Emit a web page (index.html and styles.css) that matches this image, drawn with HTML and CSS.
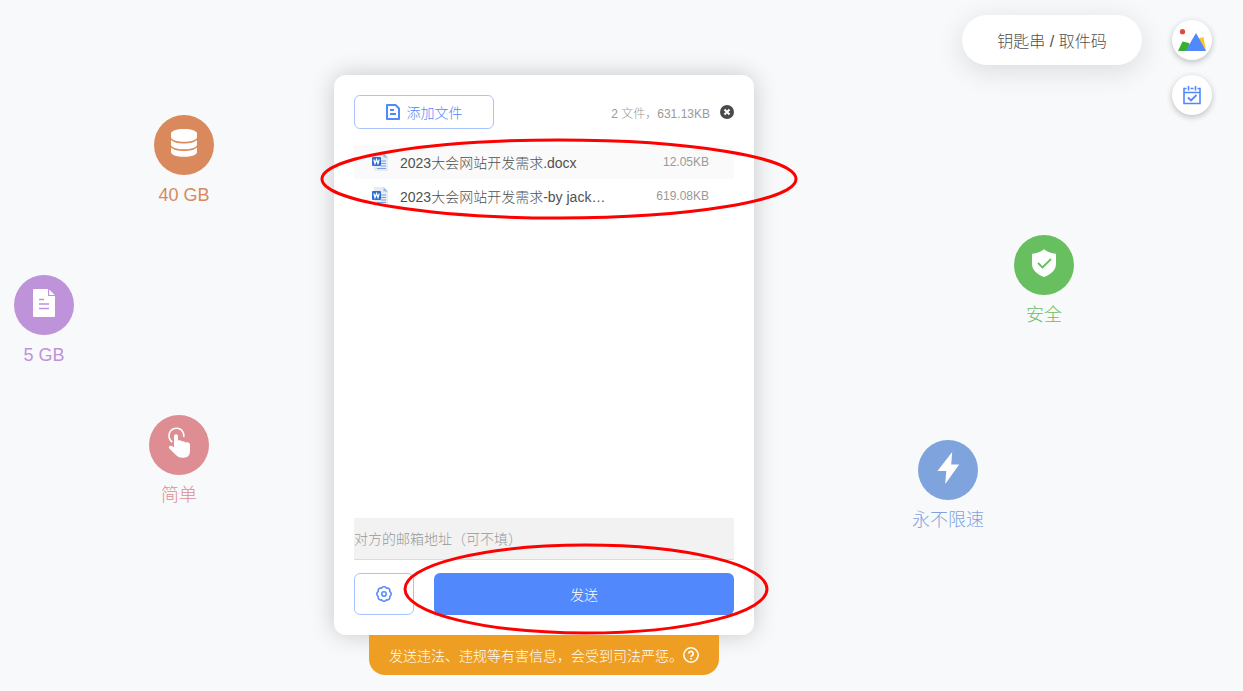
FILE: index.html
```html
<!DOCTYPE html>
<html lang="zh-CN">
<head>
  <meta charset="UTF-8" />
  <meta name="viewport" content="width=device-width, initial-scale=1" />
  <title>发送文件</title>
  <link rel="stylesheet" href="styles.css">
</head>
<body>

  <main class="stage">

    <div class="features features-left">
      <div class="feature storage">
        <span class="feature-icon">
          <svg width="60" height="60" viewBox="0 0 60 60">
            <g fill="#fff">
              <path d="M17 18.500c0-2.600 5.500-4.500 13-4.500s13 1.900 13 4.500v3.500c0 2.700-5.500 4.800-13 4.800s-13-2.100-13-4.800z" />
              <path d="M17 25c2.500 2.500 7.500 3.500 13 3.500s10.500-1 13-3.500v4.500c0 2.700-5.500 4.800-13 4.800s-13-2.100-13-4.800z" />
              <path d="M17 32.500c2.500 2.500 7.500 3.500 13 3.500s10.500-1 13-3.500v4.500c0 2.700-5.500 4.800-13 4.800s-13-2.100-13-4.800z" />
            </g>
          </svg>
        </span>
        <span>40 GB</span>
      </div>
      <div class="feature single">
        <span class="feature-icon">
          <svg width="60" height="60" viewBox="0 0 60 60">
            <path d="M20 14h14v7h7v20a1 1 0 0 1-1 1H20a1 1 0 0 1-1-1V15a1 1 0 0 1 1-1z" fill="#fff" />
            <path d="M35.200 14.500l5.500 5.500h-5.500z" fill="#fff" />
            <path d="M25 24.500h5M25 29h10M25 33.500h10" stroke="#be93d9" stroke-width="1.500" fill="none" />
          </svg>
        </span>
        <span>5 GB</span>
      </div>
      <div class="feature simple">
        <span class="feature-icon">
          <svg width="60" height="60" viewBox="0 0 60 60">
            <path d="M23.300 27a7.500 7.500 0 1 1 11.500-5" fill="none" stroke="#fff" stroke-width="1.600" />
            <path d="M25 21.300a2 2 0 0 1 4 0V25.500q2.600-1 3.800.8 2.400-.6 3.600 1.200Q40.800 26.600 41 30v6.500q-.3 6.200-6.500 6.200-4.500.4-7-2.200L20.300 33.500q-1.200-1.600.2-2.600 1.300-.7 4.500 1.300z" fill="#fff" />
          </svg>
        </span>
        <span>简单</span>
      </div>
    </div>

    <div class="sender">
      <form class="card">
        <div class="card-head">
          <button type="button" class="btn add-btn">
            <svg width="14" height="16" viewBox="0 0 14 16" fill="none" stroke="currentColor" stroke-width="2">
              <path d="M1 1h8.500L13 4.500V15H1z" stroke-linejoin="round" />
              <path d="M4 6h4M4 10h6" />
            </svg>
            添加文件
          </button>
          <span class="total">2 文件，631.13KB</span>
          <button type="button" class="clear-btn" aria-label="清空">
            <svg width="14" height="14" viewBox="0 0 14 14">
              <circle cx="7" cy="7" r="7" fill="#4a4a4a" />
              <path d="M4.500 4.500l5 5M9.500 4.500l-5 5" stroke="#fff" stroke-width="2" />
            </svg>
          </button>
        </div>

        <ul class="files">
          <li>
            <svg class="doc" width="16" height="18" viewBox="0 0 16 18">
              <path d="M2 0h9.500L16 4.500V18H2z" fill="#e6ecf5" />
              <path d="M11.500 0L16 4.500h-4.500z" fill="#a5bce0" />
              <path d="M9 8h5M9 10.500h5M9 13h5M5 15.500h9" stroke="#7da2dc" stroke-width="1" />
              <rect y="4" width="9" height="9" rx="1" fill="#2f6fd0" />
              <path d="M1.800 6.500l1.200 4 1.500-4 1.500 4 1.200-4" fill="none" stroke="#fff" stroke-width="1.200" />
            </svg>
            <span class="name">2023大会网站开发需求.docx</span>
            <span class="size">12.05KB</span>
          </li>
          <li>
            <svg class="doc" width="16" height="18" viewBox="0 0 16 18">
              <path d="M2 0h9.500L16 4.500V18H2z" fill="#e6ecf5" />
              <path d="M11.500 0L16 4.500h-4.500z" fill="#a5bce0" />
              <path d="M9 8h5M9 10.500h5M9 13h5M5 15.500h9" stroke="#7da2dc" stroke-width="1" />
              <rect y="4" width="9" height="9" rx="1" fill="#2f6fd0" />
              <path d="M1.800 6.500l1.200 4 1.500-4 1.500 4 1.200-4" fill="none" stroke="#fff" stroke-width="1.200" />
            </svg>
            <span class="name">2023大会网站开发需求-by jack…</span>
            <span class="size">619.08KB</span>
          </li>
        </ul>

        <input type="email" class="email" placeholder="对方的邮箱地址（可不填）" aria-label="对方的邮箱地址" />

        <div class="actions">
          <button type="button" class="btn set-btn" aria-label="设置">
            <svg width="16" height="16" viewBox="0 0 16 16" fill="none" stroke="currentColor" stroke-width="1.500">
              <path d="M13.800 5.600A2.700 2.700 0 0 1 13.800 10.400A2.700 2.700 0 0 1 10.400 13.800A2.700 2.700 0 0 1 5.600 13.800A2.700 2.700 0 0 1 2.200 10.400A2.700 2.700 0 0 1 2.200 5.600A2.700 2.700 0 0 1 5.600 2.200A2.700 2.700 0 0 1 10.400 2.200A2.700 2.700 0 0 1 13.800 5.600z" />
              <circle cx="8" cy="8" r="2.200" />
            </svg>
          </button>
          <button type="button" class="send-btn">发送</button>
        </div>
      </form>

      <div class="notice">
        <span>发送违法、违规等有害信息，会受到司法严惩。</span>
        <svg width="16" height="16" viewBox="0 0 16 16" fill="none" stroke="#fff" stroke-width="1.500">
          <circle cx="8" cy="8" r="7.200" />
          <path d="M5.800 6.500a2.200 2.200 0 1 1 3.300 1.900c-.8.400-1.100.8-1.100 1.500" stroke-width="1.700" />
          <path d="M8 11v1.600" stroke-width="1.700" />
        </svg>
      </div>

      <!-- hand drawn marks over the card -->
      <svg class="marks" width="420" height="600" viewBox="0 0 420 600" fill="none" stroke="#f00" stroke-width="3">
        <ellipse cx="225" cy="104" rx="237" ry="39" />
        <ellipse cx="252" cy="514" rx="181" ry="44" />
      </svg>
    </div>

    <div class="features features-right">
      <div class="feature safe">
        <span class="feature-icon">
          <svg width="60" height="60" viewBox="0 0 60 60">
            <path d="M30 14.200c3 2.500 7 4.200 12 4.500v10c0 6.500-5 10.500-12 13.300-7-2.800-12-6.800-12-13.300v-10c5-.3 9-2 12-4.500z" fill="#fff" />
            <path d="M24 28l4.500 4.500 8.500-8.500" fill="none" stroke="#67bf5f" stroke-width="1.800" />
          </svg>
        </span>
        <span>安全</span>
      </div>
      <div class="feature speed">
        <span class="feature-icon">
          <svg width="60" height="60" viewBox="0 0 60 60">
            <path d="M34.200 12L19.500 31h8.800L27.200 44l14-19.500h-8z" fill="#fff" />
          </svg>
        </span>
        <span>永不限速</span>
      </div>
    </div>

  </main>

  <nav class="tools">
    <button type="button" class="code-btn">钥匙串 / 取件码</button>
    <div class="round-list">
      <a href="#" class="round" aria-label="图片">
        <svg width="28" height="22" viewBox="0 0 28 22">
          <circle cx="4.500" cy="2.700" r="2.600" fill="#e04a3c" />
          <path d="M20 9.500L25.500 8 28 22h-6z" fill="#fbc62a" />
          <path d="M0 22L4.500 12.500 11 14 13 22z" fill="#38b02f" />
          <path d="M7.500 22L18 4l10 18z" fill="#5189fd" />
        </svg>
      </a>
      <a href="#" class="round" aria-label="日程">
        <svg width="18" height="19" viewBox="0 0 18 19" fill="none" stroke="#5189fd" stroke-width="1.600">
          <path d="M3.500 2.500H1V17.500H17V2.500H14.500M7.500 2.500h3M1 6.500h16M5.500 0v4.500M12.500 0v4.500" />
          <path d="M5 11.500l3 3 5.500-5.500" stroke-width="1.800" />
        </svg>
      </a>
    </div>
  </nav>

</body>
</html>
```

FILE: styles.css
```css
* {
  box-sizing: border-box;
}
body {
  margin: 0;
  min-height: 100vh;
  background: #f8f9fb;
  color: #505050;
  font-family: "Liberation Sans", "Noto Sans CJK SC", sans-serif;
  font-size: 14px;
  font-weight: 300;
}
button, input {
  font: inherit;
}
button {
  padding: 0;
  border: none;
  cursor: pointer;
}
svg {
  display: block;
  flex: none;
}

.stage {
  display: grid;
  grid-template-columns: 1fr 420px 1fr;
  max-width: 1060px;
  margin-left: 14px;
  padding-top: 75px;
}

/* features round the card */
.features {
  display: flex;
  flex-direction: column;
}
.features-left {
  align-items: flex-start;
  padding-top: 40px;
}
.features-right {
  align-items: flex-end;
  padding-top: 160px;
}
.feature {
  display: flex;
  flex-direction: column;
  align-items: center;
  gap: 8px;
  font-size: 18px;
  line-height: 24px;
}
.feature-icon {
  border-radius: 50%;
  background: currentColor;
}
.storage {
  margin-left: 140px;
  color: #d9895c;
}
.single {
  margin-top: 68px;
  color: #be93d9;
}
.simple {
  margin-top: 48px;
  margin-left: 135px;
  color: #de8d93;
}
.safe {
  color: #67bf5f;
}
.speed {
  margin-top: 113px;
  margin-right: 90px;
  color: #7fa3dd;
}

/* card */
.sender {
  position: relative;
}
.card {
  position: relative;
  padding: 20px;
  border-radius: 12px;
  background: #fff;
  box-shadow: 0 0 24px rgba(0, 0, 0, 0.2);
}
.card-head {
  display: flex;
  align-items: center;
  gap: 10px;
}
.btn {
  display: flex;
  align-items: center;
  justify-content: center;
  gap: 7px;
  border: 1px solid #a8c4fe;
  border-radius: 6px;
  background: #fff;
  color: #5189fd;
}
.add-btn {
  width: 140px;
  height: 34px;
}
.total {
  margin-left: auto;
  color: #999;
  font-size: 12px;
}
.clear-btn {
  background: none;
}
.files {
  min-height: 360px;
  margin: 16px 0 13px;
  padding: 0;
  list-style: none;
}
.files li {
  display: flex;
  align-items: center;
  height: 34px;
  padding: 0 25px 0 18px;
}
.files li:nth-child(odd) {
  background: #fafafa;
}
.doc {
  margin-right: 12px;
}
.size {
  margin-left: auto;
  color: #999;
  font-size: 12px;
}
.email {
  display: block;
  width: 100%;
  height: 42px;
  padding: 0;
  border: none;
  border-bottom: 1px solid #dcdcdc;
  border-radius: 0;
  background: #f2f2f2;
  outline: none;
}
.email::placeholder {
  color: #999;
}
.actions {
  display: flex;
  gap: 20px;
  margin-top: 13px;
}
.set-btn {
  width: 60px;
  height: 42px;
}
.send-btn {
  flex: 1;
  border-radius: 6px;
  background: #5189fd;
  color: #fff;
}

.notice {
  display: flex;
  align-items: center;
  justify-content: center;
  position: relative;
  height: 40px;
  margin: 0 35px;
  border-radius: 0 0 16px 16px;
  background: #ee9e22;
  color: #fff;
}
.marks {
  position: absolute;
  top: 0;
  left: 0;
  overflow: visible;
  pointer-events: none;
}

/* floating tools, top right */
.tools {
  display: flex;
  align-items: flex-start;
  gap: 30px;
  position: absolute;
  top: 15px;
  right: 31px;
}
.code-btn {
  width: 180px;
  height: 50px;
  border-radius: 25px;
  background: #fff;
  color: #505050;
  font-size: 16px;
  box-shadow: 0 6px 28px rgba(0, 0, 0, 0.12);
}
.round-list {
  display: grid;
  gap: 15px;
  padding-top: 5px;
}
.round {
  display: flex;
  align-items: center;
  justify-content: center;
  width: 40px;
  height: 40px;
  border-radius: 50%;
  background: #fff;
  box-shadow: 0 2px 6px rgba(0, 0, 0, 0.24);
}
```
